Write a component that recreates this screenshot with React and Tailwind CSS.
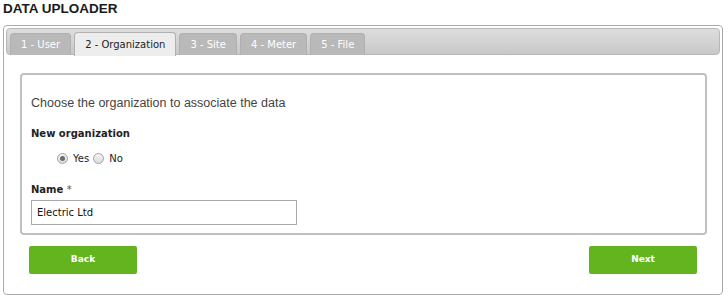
import React from 'react'

const tabs = ['1 - User', '2 - Organization', '3 - Site', '4 - Meter', '5 - File']

function Radio({ checked, label }) {
  return (
    <label className="flex items-center">
      <span className="w-[11px] h-[11px] rounded-full border border-[#a3a3a3] bg-gradient-to-b from-[#f4f4f4] to-[#dcdcdc] flex items-center justify-center">
        {checked && <span className="w-[5px] h-[5px] rounded-full bg-[#6d6d6d]" />}
      </span>
      <span className="ml-[5px] text-[10px] text-[#222]">{label}</span>
    </label>
  )
}

export default function App() {
  return (
    <div className="w-[728px] h-[299px] bg-white overflow-hidden font-['DejaVu_Sans',sans-serif]">
      <h1 className="pl-[3px] pt-px text-[13.5px] leading-[15px] font-bold text-[#1a1a1a] font-['Liberation_Sans',Arial,sans-serif]">
        DATA UPLOADER
      </h1>

      <div className="ml-[3px] mt-[9px] w-[720px] h-[270px] border border-[#ababab] rounded-[4px] p-[2px] flex flex-col">
        <div className="h-[27px] border border-[#b8b8b8] rounded-[4px] bg-gradient-to-b from-[#dedede] to-[#c8c8c8] flex items-end pl-[3px] gap-[3px]">
          {tabs.map((t, i) =>
            i === 1 ? (
              <div key={t} className="h-[24px] -mb-[2px] px-[10px] flex items-center bg-[#ededed] border border-b-0 border-[#b0b0b0] rounded-t-[4px] text-[10px] text-[#222]">
                {t}
              </div>
            ) : (
              <div key={t} className="h-[22px] -mb-px px-[10px] flex items-center bg-[#b9b9b9] border border-b-0 border-[#b0b0b0] rounded-t-[4px] text-[10px] text-white">
                {t}
              </div>
            )
          )}
        </div>

        <div className="ml-[14px] mr-[13px] mt-[18px] h-[162px] border-2 border-[#c0c0c0] rounded-[4px] px-[9px] pt-[21px]">
          <p className="text-[12.5px] leading-[15px] text-[#444] font-['Liberation_Sans',Arial,sans-serif]">
            Choose the organization to associate the data
          </p>
          <div className="mt-[17px] text-[10px] leading-[12px] font-bold text-[#222]">New organization</div>
          <div className="mt-[11px] ml-[26px] flex items-center gap-[4px]">
            <Radio checked label="Yes" />
            <Radio label="No" />
          </div>
          <div className="mt-[18px] text-[10px] leading-[12px] font-bold text-[#222]">
            Name <span className="font-normal text-[#555]">*</span>
          </div>
          <input
            className="mt-[4px] w-[266px] h-[25px] border border-[#aaaaaa] px-[5px] text-[10px] text-[#111] outline-none"
            defaultValue="Electric Ltd"
          />
        </div>

        <div className="mt-[11px] mx-[23px] flex justify-between">
          <button className="w-[108px] h-[28px] rounded-[2px] bg-[#63b41f] text-white text-[9px] font-bold">Back</button>
          <button className="w-[108px] h-[28px] rounded-[2px] bg-[#63b41f] text-white text-[9px] font-bold">Next</button>
        </div>
      </div>
    </div>
  )
}
